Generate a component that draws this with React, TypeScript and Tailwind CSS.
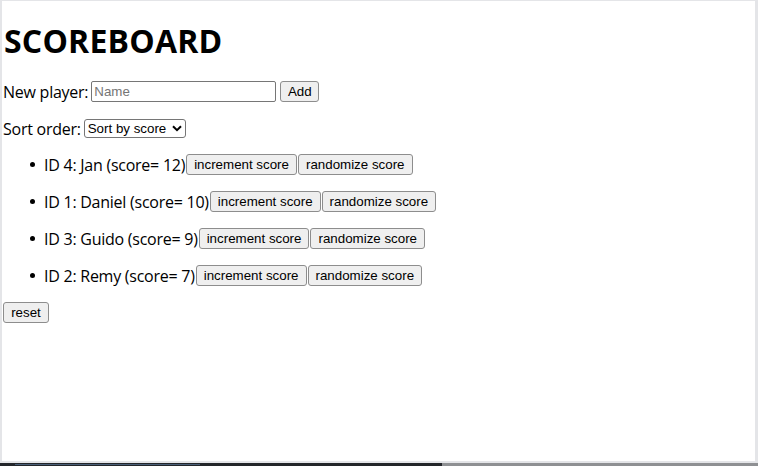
import React from 'react';

const players = [
  { id: 4, name: 'Jan', score: 12 },
  { id: 1, name: 'Daniel', score: 10 },
  { id: 3, name: 'Guido', score: 9 },
  { id: 2, name: 'Remy', score: 7 },
];

const btn =
  "h-[21px] px-[6px] bg-[#efefef] border border-[#8d8d8d] rounded-[3px] text-[13.33px] leading-none text-black tracking-normal font-['Liberation_Sans',Arial,sans-serif]";

export default function App() {
  return (
    <div className="w-[758px] h-[466px] flex flex-col bg-[#1d1f22]">
      <div className="flex-1 flex flex-col bg-[#e4e5e8] pl-[2px] pt-[1px] pr-[3px] pb-[2px]">
        <div className="flex-1 bg-white text-black font-['Open_Sans',Lato,sans-serif] text-[16px] tracking-[-0.25px] pl-[1px] flex flex-col">
          <h1 className="mt-[21px] h-[37px] text-[32px] leading-[37px] font-bold tracking-[0.2px] pl-[1px]">SCOREBOARD</h1>
          <div className="mt-[22px] flex flex-col">
            <div className="h-[21px] flex items-center">
              <span>New player:</span>
              <input
                placeholder="Name"
                className="ml-[3px] w-[185px] h-[21px] px-[2px] border border-[#767676] rounded-[2px] text-[13.33px] tracking-normal font-['Liberation_Sans',Arial,sans-serif] placeholder:text-[#757575] outline-none"
              />
              <button className={btn + ' ml-[4px] w-[39px]'}>Add</button>
            </div>
            <div className="mt-[16px] h-[21px] flex items-center">
              <span>Sort order:</span>
              <div className="ml-[3px] w-[102px] h-[19px] border border-[#767676] rounded-[3px] flex items-center justify-between pl-[3px] pr-[3px] text-[13.33px] tracking-normal font-['Liberation_Sans',Arial,sans-serif]">
                <span>Sort by score</span>
                <svg width="10" height="7" viewBox="0 0 10 7">
                  <path d="M1 1.2 L5 5.2 L9 1.2" fill="none" stroke="black" strokeWidth="2" />
                </svg>
              </div>
            </div>
            <div className="mt-[15px] flex flex-col gap-[16px]">
              {players.map((p) => (
                <div key={p.id} className="h-[21px] flex items-center pl-[27px]">
                  <span className="w-[5px] h-[5px] rounded-full bg-black mr-[9px]" />
                  <span>
                    ID {p.id}: {p.name} (score= {p.score})
                  </span>
                  <button className={btn + ' ml-[1px] px-[7px]'}>increment score</button>
                  <button className={btn + ' ml-[1px] px-[7px]'}>randomize score</button>
                </div>
              ))}
              <div className="h-[21px] flex items-center">
                <button className={btn + ' w-[46px] h-[20px]'}>reset</button>
              </div>
            </div>
          </div>
        </div>
      </div>
      <div className="h-[3px] flex">
        <div className="w-[442px] bg-[#23262a] flex items-center pl-[15px]">
          <div className="w-[185px] h-[1px] bg-[#4a5f78]" />
        </div>
        <div className="flex-1 bg-[#8e9093]" />
      </div>
    </div>
  );
}
